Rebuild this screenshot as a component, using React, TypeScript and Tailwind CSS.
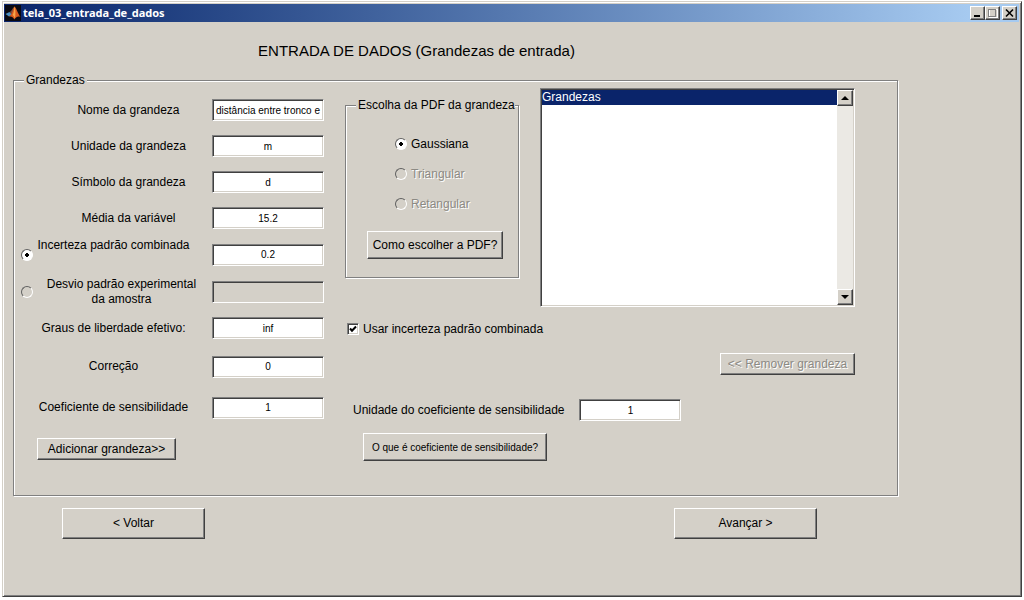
import { ReactNode } from 'react';
import clsx from 'clsx';

const raised =
    'bg-[#d4d0c8] border border-t-white border-l-white border-r-[#404040] border-b-[#404040] shadow-[inset_-1px_-1px_0_#808080]';
const sunken =
    'border border-t-[#808080] border-l-[#808080] border-r-white border-b-white shadow-[inset_1px_1px_0_#404040,inset_-1px_-1px_0_#d4d0c8]';
const etched = 'min-w-0 border border-[#808080] shadow-[1px_1px_0_#fff,inset_1px_1px_0_#fff]';
const disabledText = 'disabled:text-[#8c8a84] disabled:[text-shadow:1px_1px_0_#fff]';

type Field = {
    id: string;
    label: string;
    value: string;
    row: string;
    align: string;
    radio?: 'on' | 'off';
    disabled?: boolean;
};

const fields: Field[] = [
    { id: 'nome', label: 'Nome da grandeza', value: 'distância entre tronco e', row: 'h-9', align: 'pl-2' },
    { id: 'unidade', label: 'Unidade da grandeza', value: 'm', row: 'h-9', align: 'pl-2' },
    { id: 'simbolo', label: 'Símbolo da grandeza', value: 'd', row: 'h-9', align: 'pl-2' },
    { id: 'media', label: 'Média da variável', value: '15.2', row: 'h-9', align: 'pl-2' },
    { id: 'incerteza', label: 'Incerteza padrão combinada', value: '0.2', row: 'h-[37px]', align: 'pr-[22px] pt-0.5 self-start', radio: 'on' },
    { id: 'desvio', label: 'Desvio padrão experimental da amostra', value: '', row: 'h-[37px]', align: 'pl-2 pr-3.5', radio: 'off', disabled: true },
    { id: 'graus', label: 'Graus de liberdade efetivo:', value: 'inf', row: 'h-9', align: 'pr-[22px]' },
    { id: 'correcao', label: 'Correção', value: '0', row: 'h-[41px]', align: 'pr-[22px]' },
    { id: 'coeficiente', label: 'Coeficiente de sensibilidade', value: '1', row: 'h-[41px]', align: 'pr-[22px]' },
];

const pdfs = [
    { id: 'gaussiana', label: 'Gaussiana', disabled: false },
    { id: 'triangular', label: 'Triangular', disabled: true },
    { id: 'retangular', label: 'Retangular', disabled: true },
];

function Radio({ id, name, label, checked, disabled }: { id: string; name: string; label?: string; checked?: boolean; disabled?: boolean }) {
    return (
        <input
            type="radio"
            id={id}
            name={name}
            aria-label={label}
            defaultChecked={checked}
            disabled={disabled}
            className="size-3 shrink-0 appearance-none rounded-full border border-t-[#606060] border-l-[#606060] border-r-white border-b-white checked:bg-white checked:bg-[radial-gradient(circle,#000_2px,transparent_2px)]"
        />
    );
}

function TextBox({ id, value, disabled, className }: { id: string; value: string; disabled?: boolean; className: string }) {
    return (
        <input
            type="text"
            id={id}
            defaultValue={value}
            disabled={disabled}
            className={clsx(sunken, 'h-[22px] shrink-0 bg-white px-0.5 text-center text-[10px] text-black outline-none disabled:bg-[#d4d0c8]', className)}
        />
    );
}

function Button({ children, className, disabled }: { children: ReactNode; className: string; disabled?: boolean }) {
    return (
        <button type="button" disabled={disabled} className={clsx(raised, disabledText, 'whitespace-nowrap', className)}>
            {children}
        </button>
    );
}

function MatlabIcon() {
    return (
        <svg viewBox="0 0 16 16" className="size-4 shrink-0" aria-hidden="true">
            <rect width="16" height="16" fill="#0a0a12" />
            <path d="M0.5 9 L4.5 7 L7 9.5 L4 11.5 Z" fill="#4a8fc4" />
            <path d="M4.5 7 C6.5 6.5 7.5 3 9.5 1.5 L8 8 L7 9.5 Z" fill="#7d4a3a" />
            <path d="M9.5 1.5 C11.5 3 13 9 15.5 12 C13 11 11.5 11.5 9.5 14.5 C8.5 12.5 7 11 4 11.5 C7.5 9.5 8 4 9.5 1.5 Z" fill="#d95a1e" />
            <path d="M9.5 1.5 C10.5 4 10.8 8 10 13.5 C9 11.5 8.5 10.5 7.5 10 C9 8 9 4 9.5 1.5 Z" fill="#f7a64a" />
        </svg>
    );
}

function TitleBar() {
    const control = clsx(raised, 'flex h-3.5 w-[15px] items-center justify-center');
    return (
        <header className="flex h-[18px] items-center gap-0.5 bg-linear-to-r from-[#0a246a] to-[#a6caf0] to-95% pr-0.5 pl-px">
            <MatlabIcon />
            <span className="flex-1 font-['Noto_Sans',sans-serif] text-[11px] leading-4 font-bold text-white">tela_03_entrada_de_dados</span>
            <div className="flex">
                <button type="button" aria-label="Minimizar" className={control}>
                    <svg viewBox="0 0 11 10" className="h-2.5 w-[11px]">
                        <path d="M2 7h6v2H2z" />
                    </svg>
                </button>
                <button type="button" aria-label="Maximizar" className={control} disabled>
                    <svg viewBox="0 0 11 10" className="h-2.5 w-[11px]" fill="none" shapeRendering="crispEdges">
                        <path d="M2 1.5h8v8h-8z" stroke="#fff" />
                        <path d="M1 1h8M1.5 1v7.5h7V1" stroke="#808080" />
                    </svg>
                </button>
            </div>
            <button type="button" aria-label="Fechar" className={control}>
                <svg viewBox="0 0 11 10" className="h-2.5 w-[11px]">
                    <path d="M2 1.5l7 7M9 1.5l-7 7" stroke="#000" strokeWidth="1.6" />
                </svg>
            </button>
        </header>
    );
}

function ListBox() {
    const arrow = clsx(raised, 'flex size-4 items-center justify-center');
    return (
        <div className={clsx(sunken, 'flex h-[219px] min-w-0 flex-1 bg-white p-px')}>
            <select
                size={10}
                aria-label="Grandezas"
                defaultValue="grandezas"
                className="min-w-0 flex-1 appearance-none overflow-hidden border-0 bg-white p-0 outline-none [scrollbar-width:none]"
            >
                <option
                    value="grandezas"
                    className="h-[15px] min-h-[15px] bg-linear-to-r from-[#0a246a] to-[#0a246a] p-0 text-[12px] leading-[15px] [-webkit-text-fill-color:#fff]"
                >
                    Grandezas
                </option>
            </select>
            <div className="flex w-4 flex-col justify-between bg-[#ebe9e4]">
                <button type="button" aria-label="Rolar para cima" className={arrow}>
                    <svg viewBox="0 0 8 4" className="h-1 w-2">
                        <path d="M0 4l4-4 4 4z" />
                    </svg>
                </button>
                <button type="button" aria-label="Rolar para baixo" className={arrow}>
                    <svg viewBox="0 0 8 4" className="h-1 w-2">
                        <path d="M0 0l4 4 4-4z" />
                    </svg>
                </button>
            </div>
        </div>
    );
}

function InputFields() {
    return (
        <div className="w-[303px] shrink-0 pt-1">
            {fields.map((f) => (
                <div key={f.id} className={clsx('flex items-center', f.row)}>
                    <div className="flex w-4 shrink-0">
                        {f.radio && <Radio id={`modo-${f.id}`} name="modo" label={f.label} checked={f.radio === 'on'} />}
                    </div>
                    <label htmlFor={f.id} className={clsx('flex-1 text-center', f.align)}>
                        {f.label}
                    </label>
                    <TextBox id={f.id} value={f.value} disabled={f.disabled} className="w-28" />
                </div>
            ))}
            <Button className="mt-2.5 ml-4 h-[22px] w-[139px]">Adicionar grandeza&gt;&gt;</Button>
        </div>
    );
}

function PdfGroup() {
    return (
        <fieldset className={clsx(etched, 'mt-2.5 w-[174px] shrink-0 pb-[18px]')}>
            <legend className="ml-2.5 bg-[#d4d0c8] pl-0.5 whitespace-nowrap">Escolha da PDF da grandeza</legend>
            <div className="pt-4 pl-[49px]">
                {pdfs.map((p) => (
                    <div key={p.id} className="flex h-[30px] items-center gap-1">
                        <Radio id={p.id} name="pdf" checked={!p.disabled} disabled={p.disabled} />
                        <label htmlFor={p.id} className={clsx(p.disabled && 'text-[#8c8a84] [text-shadow:1px_1px_0_#fff]')}>
                            {p.label}
                        </label>
                    </div>
                ))}
            </div>
            <Button className="mt-3 ml-[21px] block h-7 w-[136px]">Como escolher a PDF?</Button>
        </fieldset>
    );
}

export default function App() {
    return (
        <div className="flex min-h-screen bg-white pt-px pr-0.5 pb-[3px] pl-0.5 font-['Liberation_Sans',Arial,sans-serif] text-[12px] leading-[15px] text-black">
            <main className="flex-1 border border-t-[#d4d0c8] border-r-[#404040] border-b-[#404040] border-l-[#d4d0c8] bg-[#d4d0c8] p-0.5 pl-px shadow-[inset_1px_1px_0_#fff,inset_-1px_-1px_0_#808080]">
                <TitleBar />

                <div className="mr-[121px] ml-[9px]">
                    <h1 className="pt-[19px] pr-[78px] pb-3 text-center text-[15px] leading-5">ENTRADA DE DADOS (Grandezas de entrada)</h1>

                    <fieldset className={clsx(etched, 'pb-[34px]')}>
                        <legend className="ml-2.5 bg-[#d4d0c8] px-0.5">Grandezas</legend>
                        <div className="flex gap-[21px] pr-[42px] pl-[7px]">
                            <InputFields />

                            <div className="min-w-0 flex-1">
                                <div className="flex items-start gap-[21px]">
                                    <PdfGroup />
                                    <ListBox />
                                </div>

                                <div className="flex h-11 items-center gap-1 pl-0.5">
                                    <span className="grid size-3 place-items-center">
                                        <input
                                            type="checkbox"
                                            id="usar-incerteza"
                                            defaultChecked
                                            className={clsx(sunken, 'peer col-start-1 row-start-1 size-3 appearance-none bg-white')}
                                        />
                                        <svg viewBox="0 0 8 8" className="pointer-events-none col-start-1 row-start-1 hidden size-2 peer-checked:block">
                                            <path d="M1 3.5l2 2.2L7 1.5" fill="none" stroke="#000" strokeWidth="2" />
                                        </svg>
                                    </span>
                                    <label htmlFor="usar-incerteza">Usar incerteza padrão combinada</label>
                                </div>

                                <div className="flex justify-end pt-0.5">
                                    <Button disabled className="h-[22px] w-[135px]">
                                        &lt;&lt; Remover grandeza
                                    </Button>
                                </div>

                                <div className="flex items-center gap-[15px] pt-6 pl-2">
                                    <label htmlFor="unidade-coef">Unidade do coeficiente de sensibilidade</label>
                                    <TextBox id="unidade-coef" value="1" className="w-[102px]" />
                                </div>

                                <Button className="mt-3 ml-[18px] h-7 w-[184px] text-[10px]">O que é coeficiente de sensibilidade?</Button>
                            </div>
                        </div>
                    </fieldset>

                    <nav className="flex justify-between pt-3 pr-[81px] pl-[49px]">
                        <Button className="h-[31px] w-[143px]">&lt; Voltar</Button>
                        <Button className="h-[31px] w-[143px]">Avançar &gt;</Button>
                    </nav>
                </div>
            </main>
        </div>
    );
}
